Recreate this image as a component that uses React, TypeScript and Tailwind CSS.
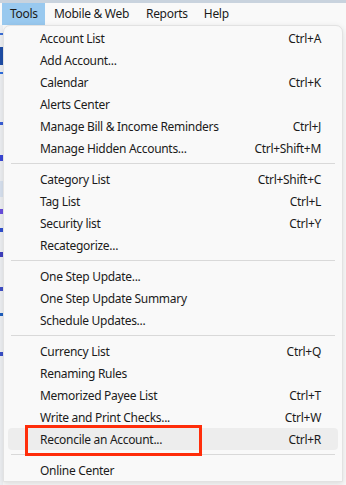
import React from "react";

type Item = { label: string; shortcut?: string; active?: boolean } | "sep";

const items: Item[] = [
  { label: "Account List", shortcut: "Ctrl+A" },
  { label: "Add Account..." },
  { label: "Calendar", shortcut: "Ctrl+K" },
  { label: "Alerts Center" },
  { label: "Manage Bill & Income Reminders", shortcut: "Ctrl+J" },
  { label: "Manage Hidden Accounts...", shortcut: "Ctrl+Shift+M" },
  "sep",
  { label: "Category List", shortcut: "Ctrl+Shift+C" },
  { label: "Tag List", shortcut: "Ctrl+L" },
  { label: "Security list", shortcut: "Ctrl+Y" },
  { label: "Recategorize..." },
  "sep",
  { label: "One Step Update..." },
  { label: "One Step Update Summary" },
  { label: "Schedule Updates..." },
  "sep",
  { label: "Currency List", shortcut: "Ctrl+Q" },
  { label: "Renaming Rules" },
  { label: "Memorized Payee List", shortcut: "Ctrl+T" },
  { label: "Write and Print Checks...", shortcut: "Ctrl+W" },
  { label: "Reconcile an Account...", shortcut: "Ctrl+R", active: true },
  "sep",
  { label: "Online Center" },
];

export default function App() {
  return (
    <div
      className="relative w-[346px] h-[485px] overflow-hidden bg-[#f9f9f9] text-[12px] leading-[16px] tracking-[-0.3px] text-[#1b1b1b]"
      style={{ fontFamily: '"Noto Sans", "Open Sans", sans-serif' }}
    >
      <div className="h-[3px] bg-[#c9d3de]" />
      <div className="flex h-[22px] items-stretch bg-[#f9f9f9]">
        <div className="ml-[2px] flex w-[43px] items-center bg-[#99c9ef] pl-[8px]">Tools</div>
        <div className="ml-[9px] flex items-center">Mobile &amp; Web</div>
        <div className="ml-[17px] flex items-center">Reports</div>
        <div className="ml-[16px] flex items-center">Help</div>
      </div>
      <div className="flex h-full">
        <div className="flex w-[3px] flex-col bg-[#eef0f3]">
          <div className="mt-[8px] h-[2px] bg-[#3b6fd8]" />
          <div className="mt-[12px] h-[18px] bg-[#1f4fa8]" />
          <div className="mt-[7px] h-[2px] bg-[#2f6fe0]" />
          <div className="mt-[48px] h-[3px] bg-[#3a5fd8]" />
          <div className="mt-[30px] h-[6px] bg-[#3a48d8]" />
          <div className="mt-[20px] h-[16px] bg-[#d8e2f0]" />
          <div className="mt-[12px] h-[5px] bg-[#6a4fe0]" />
          <div className="mt-[14px] h-[4px] bg-[#3050d0]" />
          <div className="mt-[20px] h-[5px] bg-[#4040c0]" />
          <div className="mt-[30px] h-[4px] bg-[#4050c8]" />
          <div className="mt-[22px] h-[3px] bg-[#2060c0]" />
          <div className="mt-[36px] h-[4px] bg-[#3a50c8]" />
        </div>
      </div>
      <div className="absolute left-[3px] top-[25px] w-[340px] rounded-t-[7px] border border-[#e2e2e2] bg-[#f9f9f9] pt-[1px] shadow-[0_2px_6px_rgba(0,0,0,0.12)]">
        {items.map((it, i) =>
          it === "sep" ? (
            <div key={i} className="mx-[7px] my-[4px] h-px bg-[#d9d9d9]" />
          ) : (
            <div
              key={i}
              className={
                "relative mx-[4px] flex h-[22px] items-center justify-between rounded-[4px] pl-[32px] pr-[17px] pt-[1px] " +
                (it.active ? "bg-[#ededed]" : "")
              }
            >
              <span>{it.label}</span>
              {it.shortcut && <span>{it.shortcut}</span>}
              {it.active && (
                <div className="absolute left-[17px] top-[-3px] h-[31px] w-[177px] border-[3px] border-[#ff2d0a]" />
              )}
            </div>
          )
        )}
      </div>
    </div>
  );
}
